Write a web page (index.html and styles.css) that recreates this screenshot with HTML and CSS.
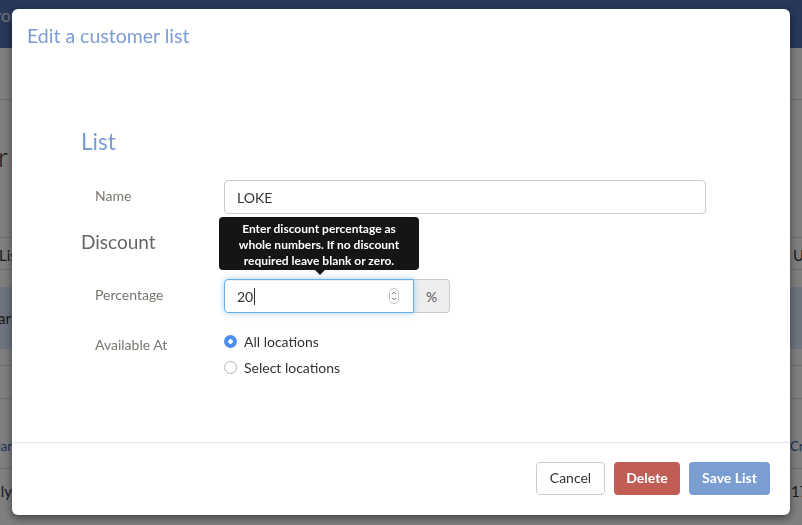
FILE: index.html
```html
<!DOCTYPE html>
<html lang="en">
<head>
    <meta charset="utf-8">
    <title>Edit a customer list</title>
    <link rel="stylesheet" href="styles.css">
</head>
<body>
    <!-- page behind the dialog -->
    <div class="app">
        <nav class="topnav">
            <span class="nav-item">Promotions</span>
            <span class="nav-item">Products</span>
            <span class="nav-item">Retail</span>
            <span class="nav-item">Reports</span>
        </nav>
        <div class="page-bar"></div>
        <div class="page-title"><span class="peek-left">Customer</span></div>

        <div class="table">
            <div class="trow trow-head">
                <span class="peek-left cell-list">List</span>
                <span class="peek-right">Updated</span>
            </div>
            <div class="trow trow-gap"></div>
            <div class="trow trow-selected">
                <span class="peek-left cell-ar">Regular</span>
            </div>
            <div class="trow trow-gap2"></div>
            <div class="trow trow-select">
                <span class="caret"></span>
            </div>
            <div class="trow trow-link">
                <span class="peek-left link">Regular</span>
                <span class="peek-right link">Created</span>
            </div>
            <div class="trow trow-last">
                <span class="peek-left">Shelly</span>
                <span class="peek-right">17</span>
            </div>
        </div>
    </div>

    <div class="backdrop"></div>

    <!-- dialog -->
    <div class="modal">
        <div class="modal-header">
            <h4 class="modal-title">Edit a customer list</h4>
        </div>

        <div class="modal-body">
            <h3 class="section-title">List</h3>
            <div class="form-row">
                <label class="form-label">Name</label>
                <div class="form-control name-input">LOKE</div>
            </div>

            <h3 class="section-title section-sub">Discount</h3>
            <div class="form-row percent-row">
                <label class="form-label">Percentage</label>
                <div class="input-group">
                    <div class="tooltip">Enter discount percentage as whole numbers. If no discount required leave blank or zero.</div>
                    <div class="form-control percent-input focused">
                        <span>20</span><span class="text-caret"></span>
                        <svg class="spinner" width="10" height="16" viewBox="0 0 10 16">
                            <rect x="0.5" y="0.5" width="9" height="15" rx="4.5" fill="#fff" stroke="#c8c8c8"/>
                            <path d="M3 6.2 L5 4.2 L7 6.2" fill="none" stroke="#666" stroke-width="1"/>
                            <path d="M3 9.8 L5 11.8 L7 9.8" fill="none" stroke="#666" stroke-width="1"/>
                        </svg>
                    </div>
                    <span class="input-addon">%</span>
                </div>
            </div>

            <div class="form-row avail-row">
                <label class="form-label avail-label">Available At</label>
                <div class="radios">
                    <div class="radio"><span class="radio-dot checked"></span>All locations</div>
                    <div class="radio"><span class="radio-dot"></span>Select locations</div>
                </div>
            </div>
        </div>

        <div class="modal-footer">
            <button class="btn btn-default">Cancel</button>
            <button class="btn btn-danger">Delete</button>
            <button class="btn btn-primary">Save List</button>
        </div>
    </div>
</body>
</html>
```

FILE: styles.css
```css
* {
    box-sizing: border-box;
    margin: 0;
    padding: 0;
}

html, body {
    width: 802px;
    height: 525px;
    overflow: hidden;
}

body {
    font-family: Lato, "Open Sans", sans-serif;
    background: #fff;
    color: #333;
    font-size: 14px;
}

/* Page behind the dialog */
.app {
    width: 802px;
    height: 525px;
    overflow: hidden;
}

.topnav {
    height: 48px;
    background: #4e70b4;
    display: flex;
    padding-top: 6px;
    margin-left: -15px;
}

.nav-item {
    width: 136px;
    flex: none;
    color: #e4e8f0;
    font-size: 17px;
    line-height: 20px;
}

.page-bar {
    height: 52px;
    border-bottom: 1px solid #ddd;
}

.page-title {
    height: 137px;
    padding-top: 40px;
    font-size: 28px;
    font-weight: 300;
    line-height: 32px;
    color: #333;
}

.peek-left {
    display: inline-block;
    width: 140px;
    margin-left: -128px;
    text-align: right;
}

.page-title .peek-left {
    width: 150px;
    margin-left: -142px;
}

.trow {
    display: flex;
    justify-content: space-between;
    align-items: center;
    font-size: 15px;
    color: #333;
}

.trow-head {
    height: 33px;
    border-top: 1px solid #ddd;
    border-bottom: 1px solid #ddd;
    padding-top: 2px;
}

.cell-list {
    width: 40px;
    margin-left: -1px;
    text-align: left;
}

.peek-right {
    display: inline-block;
    width: 80px;
    margin-right: -71px;
    text-align: left;
}

.trow-gap {
    height: 17px;
}

.trow-selected {
    height: 62px;
    background: #dce9ff;
}

.cell-ar {
    width: 70px;
    margin-left: -59px;
}

.trow-gap2 {
    height: 17px;
    border-bottom: 1px solid #ddd;
}

.trow-select {
    height: 33px;
    border-bottom: 1px solid #ddd;
    align-items: flex-start;
}

.caret {
    width: 0;
    height: 0;
    margin: 8px 0 0 18px;
    border-left: 4px solid transparent;
    border-right: 4px solid transparent;
    border-top: 5px solid #333;
}

.trow-link {
    height: 70px;
    border-bottom: 1px solid #ddd;
    align-items: flex-end;
    padding-bottom: 14px;
}

.link {
    color: #3c64b0;
    font-size: 13px;
}

.trow-link .peek-left {
    width: 60px;
    margin-left: -48px;
}

.trow-link .peek-right {
    margin-right: -68px;
}

.trow-last {
    height: 52px;
    padding-bottom: 8px;
}

.trow-last .peek-left {
    width: 60px;
    margin-left: -48px;
}

.trow-last .peek-right {
    margin-right: -69px;
}

.backdrop {
    position: fixed;
    inset: 0;
    background: rgba(0, 0, 0, 0.5);
}

/* Dialog */
.modal {
    position: fixed;
    top: 9px;
    left: 12px;
    width: 778px;
    height: 506px;
    background: #fff;
    border-radius: 6px;
    box-shadow: 0 3px 9px rgba(0, 0, 0, 0.5);
    display: flex;
    flex-direction: column;
}

.modal-header {
    padding: 14px 15px 16px;
}

.modal-title {
    font-size: 19.5px;
    line-height: 26px;
    font-weight: 400;
    color: #7b9bd3;
}

.modal-body {
    flex: 1;
    padding-left: 69px;
}

.section-title {
    margin-top: 62px;
    font-size: 22.5px;
    line-height: 30px;
    font-weight: 400;
    color: #7b9bd3;
}

.section-sub {
    margin-top: 15px;
    font-size: 19px;
    line-height: 26px;
    color: #666;
}

.form-row {
    display: flex;
    align-items: center;
    padding-left: 14px;
    margin-top: 23px;
}

.form-label {
    width: 129px;
    flex: none;
    font-size: 14px;
    color: #7a756f;
    padding-bottom: 3px;
}

.form-control {
    height: 34px;
    border: 1px solid #ccc;
    border-radius: 4px;
    padding: 0 12px;
    display: flex;
    align-items: center;
    font-size: 14px;
    color: #333;
}

.name-input {
    width: 482px;
}

.percent-row {
    margin-top: 24px;
}

.input-group {
    position: relative;
    display: flex;
}

.percent-input {
    width: 190px;
    border-radius: 4px 0 0 4px;
    position: relative;
}

.focused {
    border-color: #66afe9;
    box-shadow: inset 0 1px 1px rgba(0, 0, 0, 0.075), 0 0 6px rgba(102, 175, 233, 0.6);
}

.text-caret {
    width: 1px;
    height: 17px;
    background: #333;
    margin-left: 1px;
}

.spinner {
    position: absolute;
    right: 14px;
    top: 8px;
}

.input-addon {
    width: 36px;
    height: 34px;
    background: #eee;
    border: 1px solid #ccc;
    border-left: none;
    border-radius: 0 4px 4px 0;
    display: flex;
    align-items: center;
    justify-content: center;
    font-size: 14px;
    color: #555;
}

.tooltip {
    position: absolute;
    left: -5px;
    top: -62px;
    width: 200px;
    height: 53px;
    padding: 4px 12px;
    background: #151515;
    color: #fff;
    border-radius: 4px;
    font-size: 12px;
    font-weight: 700;
    line-height: 16px;
    text-align: center;
}

.tooltip::after {
    content: "";
    position: absolute;
    left: 96px;
    bottom: -5px;
    border-left: 5px solid transparent;
    border-right: 5px solid transparent;
    border-top: 5px solid #151515;
}

.avail-row {
    align-items: flex-start;
    margin-top: 18px;
}

.avail-label {
    padding-top: 5px;
}

.radios {
    display: flex;
    flex-direction: column;
    gap: 6px;
}

.radio {
    display: flex;
    align-items: center;
    height: 20px;
    font-size: 14px;
    color: #333;
}

.radio-dot {
    width: 13px;
    height: 13px;
    border-radius: 50%;
    border: 1px solid #b5b5b5;
    background: #fff;
    margin-right: 7px;
    flex: none;
}

.radio-dot.checked {
    border: none;
    background: radial-gradient(circle, #fff 0 2px, #4d8ff0 2.5px);
}

.modal-footer {
    border-top: 1px solid #e5e5e5;
    padding: 19px 20px 20px;
    display: flex;
    justify-content: flex-end;
    gap: 9px;
}

.btn {
    height: 33px;
    border: 1px solid transparent;
    border-radius: 4px;
    font-family: inherit;
    font-size: 14px;
    padding: 0 0 2px;
    cursor: pointer;
}

.btn-default {
    width: 69px;
    background: #fff;
    border-color: #ccc;
    color: #333;
}

.btn-danger {
    width: 66px;
    background: #c05e55;
    color: #fff;
    font-weight: 700;
}

.btn-primary {
    width: 81px;
    background: #7b9ed2;
    color: #fff;
    font-weight: 700;
}
```
